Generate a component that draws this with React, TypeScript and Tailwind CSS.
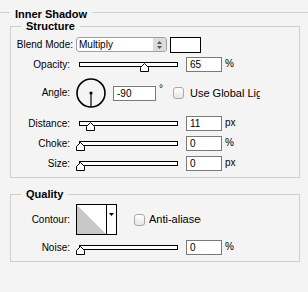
import React from 'react';

const Thumb = ({ at }: { at: number }) => (
  <svg
    className="absolute top-0"
    style={{ left: at - 4 }}
    width="9"
    height="9"
    viewBox="0 0 9 9"
  >
    <path d="M4.5 0.5 L8.5 4.5 L8.5 8.5 L0.5 8.5 L0.5 4.5 Z" fill="#fff" stroke="#000" strokeWidth="1" />
  </svg>
);

const Slider = ({ at }: { at: number }) => (
  <div className="relative ml-[9px] w-[99px] h-[5px] border border-black bg-white shrink-0">
    <Thumb at={at} />
  </div>
);

const Field = ({ value, w = 'w-[36px]', ml = 'ml-[8px]' }: { value: string; w?: string; ml?: string }) => (
  <div className={`${ml} ${w} h-[15px] border border-[#7a7a7a] bg-white pl-[3px] text-[10px] leading-[13px] text-black shrink-0`}>
    {value}
  </div>
);

const Label = ({ text, w = 'w-[59px]' }: { text: string; w?: string }) => (
  <div className={`${w} shrink-0 text-right text-[10px] leading-none whitespace-nowrap text-black`}>{text}</div>
);

const Unit = ({ text }: { text: string }) => (
  <div className="ml-[3px] self-start mt-[2px] text-[10px] leading-none text-black">{text}</div>
);

const SliderRow = ({ label, at, value, unit, mt = 'mt-[5px]' }: { label: string; at: number; value: string; unit: string; mt?: string }) => (
  <div className={`${mt} flex items-center h-[15px]`}>
    <Label text={label} />
    <Slider at={at} />
    <Field value={value} />
    <Unit text={unit} />
  </div>
);

const CheckBox = ({ ml }: { ml: string }) => (
  <div className={`${ml} w-[11px] h-[12px] rounded-[3px] border border-[#a8a8a8] bg-gradient-to-b from-white to-[#e6e6e6] shrink-0`} />
);

const Title = ({ text }: { text: string }) => (
  <div className="-mt-[8px] ml-[10px] px-[5px] w-fit bg-[#f4f4f4] text-[11px] font-bold leading-[14px] text-black">
    {text}
  </div>
);

export default function App() {
  return (
    <div className="w-[308px] h-[292px] bg-[#f4f4f4] overflow-hidden font-['Liberation_Sans',Arial,sans-serif]">
      <div className="mt-[12px] border-t border-[#cfcfcf]">
        <div className="-mt-[6px] ml-[10px] px-[5px] w-fit bg-[#f4f4f4] text-[11px] font-bold leading-[14px] text-black">
          Inner Shadow
        </div>

        {/* Structure */}
        <div className="mt-[5px] ml-[10px] w-[290px] border border-[#cfcfcf] pb-[6px]">
          <Title text="Structure" />

          <div className="mt-[4px] flex items-center h-[15px]">
            <Label text="Blend Mode:" w="w-[62px]" />
            <div className="ml-[3px] w-[91px] h-[15px] flex items-stretch rounded-[3px] border border-[#a0a0a0] bg-white overflow-hidden shrink-0">
              <div className="flex-1 pl-[2px] text-[10px] leading-[13px] text-black">Multiply</div>
              <div className="w-[13px] bg-[#dcdcdc] flex flex-col items-center justify-center gap-[2px]">
                <svg width="5" height="3" viewBox="0 0 5 3"><path d="M2.5 0 L5 3 L0 3 Z" fill="#555" /></svg>
                <svg width="5" height="3" viewBox="0 0 5 3"><path d="M0 0 L5 0 L2.5 3 Z" fill="#555" /></svg>
              </div>
            </div>
            <div className="ml-[3px] w-[31px] h-[16px] border border-black bg-white shrink-0" />
          </div>

          <SliderRow label="Opacity:" at={64} value="65" unit="%" />

          <div className="mt-[6px] flex items-center h-[30px]">
            <Label text="Angle:" />
            <svg className="ml-[6px] shrink-0" width="30" height="30" viewBox="0 0 30 30">
              <circle cx="15" cy="15" r="14" fill="none" stroke="#000" strokeWidth="1.6" />
              <circle cx="15" cy="15" r="1.6" fill="#000" />
              <line x1="15" y1="15" x2="15" y2="29" stroke="#000" strokeWidth="1.2" />
            </svg>
            <Field value="-90" w="w-[43px]" ml="ml-[7px]" />
            <div className="ml-[3px] self-start mt-[6px] text-[10px] leading-none text-black">°</div>
            <CheckBox ml="ml-[10px]" />
            <div className="ml-[6px] w-[70px] overflow-hidden whitespace-nowrap text-[11px] leading-none text-black">
              Use Global Light
            </div>
          </div>

          <SliderRow label="Distance:" at={10} value="11" unit="px" mt="mt-[8px]" />
          <SliderRow label="Choke:" at={0} value="0" unit="%" />
          <SliderRow label="Size:" at={0} value="0" unit="px" />
        </div>

        {/* Quality */}
        <div className="mt-[16px] ml-[10px] w-[290px] border border-[#cfcfcf] pb-[6px]">
          <Title text="Quality" />

          <div className="mt-[3px] flex items-center h-[31px]">
            <Label text="Contour:" />
            <div className="ml-[6px] h-[31px] flex border border-black shrink-0">
              <svg width="29" height="29" viewBox="0 0 29 29">
                <rect width="29" height="29" fill="#fff" />
                <path d="M0 0 L29 29 L0 29 Z" fill="#c8c8c8" />
              </svg>
              <div className="w-[10px] border-l border-black bg-white flex justify-center pt-[8px]">
                <svg width="5" height="3" viewBox="0 0 5 3"><path d="M0 0 L5 0 L2.5 3 Z" fill="#000" /></svg>
              </div>
            </div>
            <CheckBox ml="ml-[17px]" />
            <div className="ml-[4px] w-[52px] overflow-hidden whitespace-nowrap text-[11px] leading-none text-black">
              Anti-aliased
            </div>
          </div>

          <SliderRow label="Noise:" at={0} value="0" unit="%" />
        </div>
      </div>
    </div>
  );
}
